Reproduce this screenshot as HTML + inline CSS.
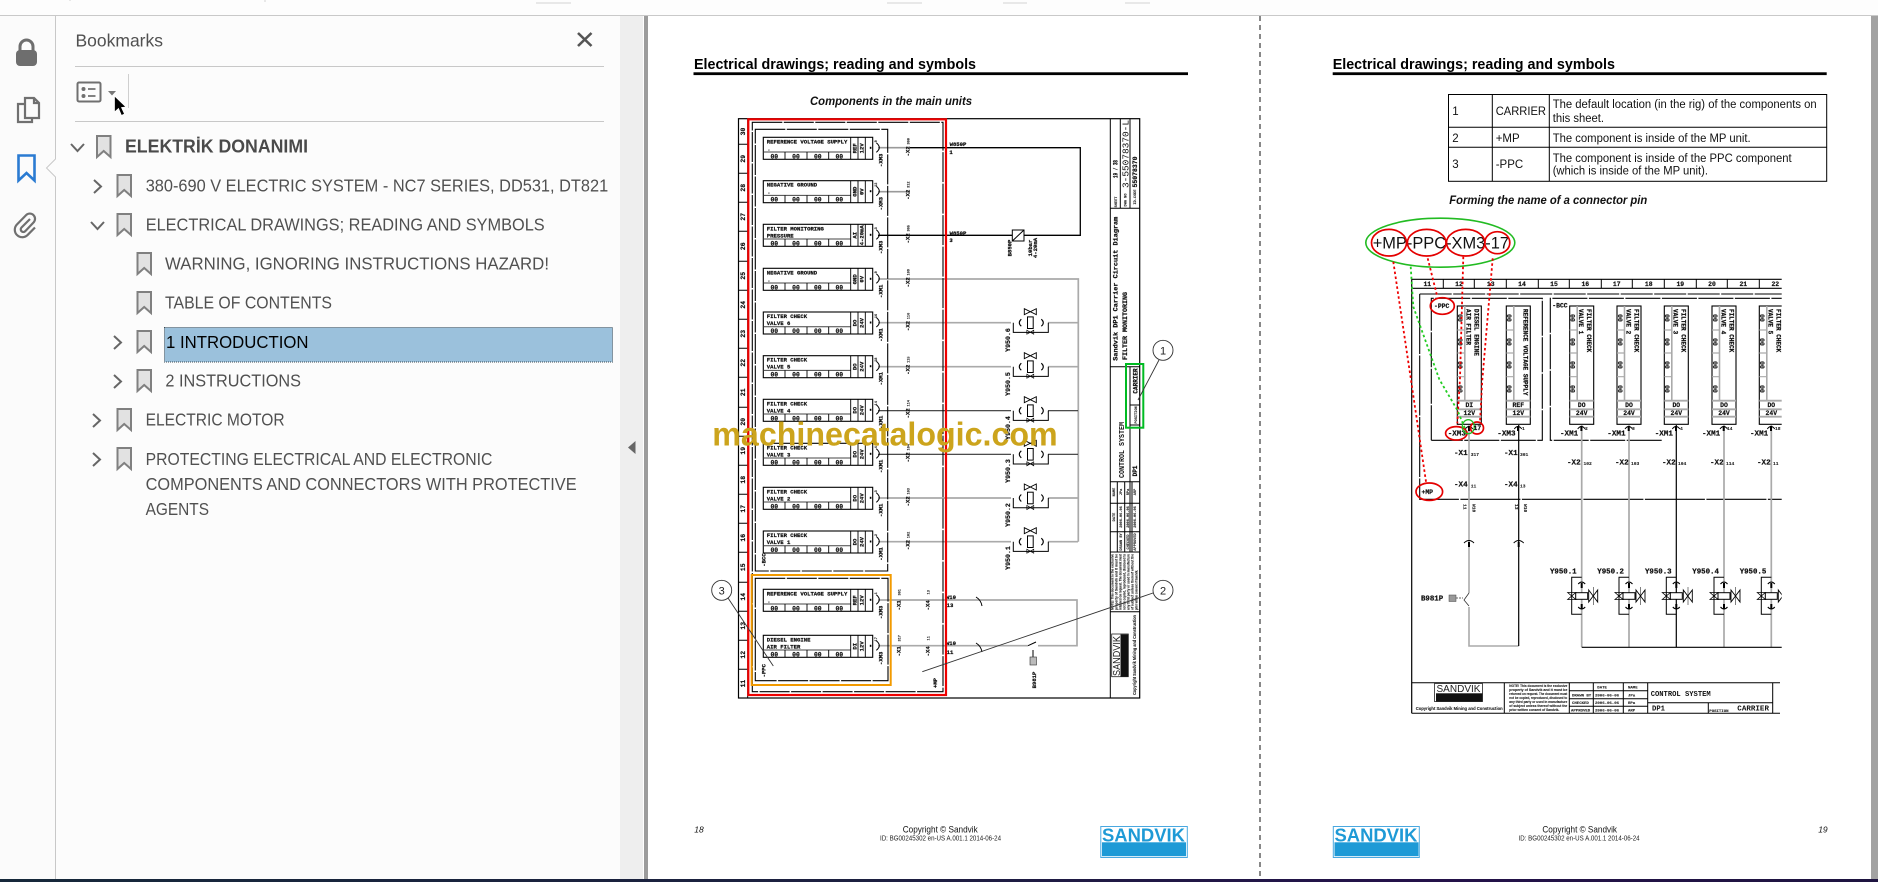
<!DOCTYPE html>
<html lang="en"><head><meta charset="utf-8"><title>Bookmarks</title>
<style>
html,body{margin:0;padding:0;background:#fff;overflow:hidden}
svg{display:block;position:absolute;left:0;top:0}
text{white-space:pre}
.ui{font-family:"Liberation Sans",sans-serif;font-size:17.5px;fill:#505050}
.h{font-family:"Liberation Sans",sans-serif;font-weight:700;font-size:15px;fill:#000}
.bi{font-family:"Liberation Sans",sans-serif;font-weight:700;font-style:italic;font-size:11.5px;fill:#111}
.t{font-family:"Liberation Sans",sans-serif;font-size:11.5px;fill:#111}
.m{font-family:"Liberation Mono",monospace;font-weight:700;font-size:5.6px;fill:#111;stroke:#111;stroke-width:.22}
.n{font-family:"Liberation Mono",monospace;font-weight:700;font-size:6.4px;fill:#111;stroke:#111;stroke-width:.18}
.s{font-family:"Liberation Mono",monospace;font-weight:700;font-size:3.6px;fill:#222;stroke:#222;stroke-width:.1}
.c{font-family:"Liberation Sans",sans-serif;font-size:9.5px;fill:#111}
.i{font-family:"Liberation Sans",sans-serif;font-size:7px;fill:#222}
.lg{font-family:"Liberation Sans",sans-serif;font-weight:700;font-size:18.5px;fill:#1e9ad6}
.ca{font-family:"Liberation Sans",sans-serif;font-size:11px;fill:#222;text-anchor:middle}
.tb{font-family:"Liberation Sans",sans-serif;font-weight:700;font-size:3.7px;fill:#222;stroke:#222;stroke-width:.1}
.mid{text-anchor:middle}
.pg{filter:blur(.28px)}
</style></head>
<body>
<svg width="1878" height="882" viewBox="0 0 1878 882" xmlns="http://www.w3.org/2000/svg">
<defs>
<g id="bm"><path d="M1 1H14.5V22L7.7 16L1 22Z" fill="#e2e2e2" stroke="#808080" stroke-width="2"/></g>
<path id="cr" d="M0 0L7 6.5L0 13" fill="none" stroke="#666" stroke-width="2"/>
<path id="cd" d="M0 0L6.5 7L13 0" fill="none" stroke="#666" stroke-width="2"/>
<g id="mod" fill="none" stroke="#000">
<rect x="0" y="0" width="109.4" height="22" fill="#fff" stroke-width="1.1"/>
<path d="M0 14.7H87.4" stroke="#444" stroke-width="1"/>
<path d="M21.7 14.7V22M43.7 14.7V22M65.4 14.7V22M87.4 0V22M94.7 0V22M102 0V22" stroke-width=".9"/>
<path d="M113 5.5Q119 10.5 113 15" stroke-width="1"/>
<rect x="106.5" y="9.5" width="1.6" height="2" fill="#000" stroke="none"/>
</g>
<g id="val" fill="none" stroke="#000" stroke-width="1">
<path d="M-17 0V9.7H18V0"/>
<rect x="-2.8" y="-5.8" width="5.7" height="11.6" fill="#fff"/>
<path d="M-9 -3.5Q-13 0 -9 3.5M11 -3.5Q15 0 11 3.5" stroke-width="1.1"/>
<path d="M-5 7.5L5 11.5V7.5L-5 11.5Z" stroke-width=".8" transform="scale(.7 1)"/>
<path d="M-6 -14L6 -8V-14L-6 -8Z" stroke-width=".9"/>
</g>
<g id="vmod" fill="none" stroke="#000">
<rect x="0" y="0" width="24" height="118.3" fill="#fff" stroke-width="1.1"/>
<path d="M7.5 0V94.7" stroke="#aaa" stroke-width="1.6"/>
<path d="M0 94.7H24M0 103.3H24M0 110.7H24" stroke="#aaa" stroke-width="1.8"/>
<path d="M0 24H7.5M0 47H7.5M0 70.7H7.5" stroke="#aaa" stroke-width="1.2"/>
<path d="M8 123Q11.7 118 15.5 123" stroke-width="1"/>
<rect x="10.7" y="120" width="2" height="5" fill="#000" stroke="none"/>
</g>
<g id="rv" fill="none" stroke="#000" stroke-width="1">
<path d="M0 -18.7H-10V18.3H0"/>
<rect x="-6" y="-3.3" width="12" height="6.6" fill="#fff" stroke-width="1"/>
<path d="M-3.5 -12Q0 -16 3.5 -12M-3.5 11Q0 15 3.5 11" stroke-width="1.1"/>
<rect x="-1" y="-13" width="2" height="5" fill="#000" stroke="none"/>
<rect x="-1" y="8" width="2" height="5" fill="#000" stroke="none"/>
<path d="M-14 -3.5H-6L-14 3.5H-6Z" stroke-width=".8"/>
<path d="M7 -7L16 5V-7L7 5Z" stroke-width=".9" transform="translate(0 1)"/>
<path d="M11.7 -9V9" stroke-width=".5"/>
</g>
<clipPath id="rc"><rect x="1400" y="270" width="381.7" height="450"/></clipPath>
</defs>

<!-- window chrome -->
<rect x="0" y="0" width="1878" height="882" fill="#fff"/>
<rect x="0" y="0" width="1878" height="15" fill="#fdfdfd"/>
<rect x="0" y="15" width="1878" height="1" fill="#c9c9c9"/>
<path d="M536 3H571M887 3H922M1003 3H1027M1125 3H1150M70 0V1M265 0V2" stroke="#d4d4d4" stroke-width="1"/>

<!-- left rail & panel -->
<rect x="0" y="16" width="55" height="863" fill="#fbfbfb"/>
<rect x="55" y="16" width="1" height="863" fill="#c8c8c8"/>
<rect x="56" y="16" width="564" height="863" fill="#fcfcfc"/>
<rect x="620" y="16" width="23" height="863" fill="#eeeeee"/>
<rect x="644" y="16" width="4" height="863" fill="#9c9c9c"/>
<path d="M635.5 441V454L628 447.5Z" fill="#666"/>

<!-- rail icons -->
<rect x="16" y="50" width="21" height="16" rx="4" fill="#6e6e6e"/>
<path d="M20 51V46.5a6.5 6.5 0 0 1 13 0V51" fill="none" stroke="#6e6e6e" stroke-width="3"/>
<g fill="none" stroke="#707070" stroke-width="2.2">
<path d="M25 98H34L39 103V118H25Z"/><path d="M34 98V103H39"/><path d="M25 104H18V122H32V118"/>
<path d="M30 219L21.5 227.5a2.6 2.6 0 0 0 3.7 3.7L33.5 222.5a5.2 5.2 0 0 0 -7.4 -7.4L16.8 224.6a7.5 7.5 0 0 0 10.6 10.6L35 227.5"/>
</g>
<path d="M18.5 155.5H34.5V180.5L26.5 173L18.5 180.5Z" fill="none" stroke="#2a7bd2" stroke-width="2.6"/>
<path d="M56 159L46.5 168L56 177Z" fill="#fcfcfc"/>
<path d="M55.5 159L46.5 168L55.5 177" fill="none" stroke="#c8c8c8" stroke-width="1"/>

<!-- panel header -->
<text class="ui" x="75.5" y="46.5" textLength="87.5" lengthAdjust="spacingAndGlyphs">Bookmarks</text>
<path d="M578 33L591.5 46M591.5 33L578 46" stroke="#555" stroke-width="2.6" fill="none"/>
<rect x="75" y="66" width="529" height="1" fill="#c8c8c8"/>
<rect x="75" y="121" width="529" height="1" fill="#c8c8c8"/>
<rect x="128" y="74" width="1" height="34" fill="#cfcfcf"/>
<rect x="77.5" y="82.5" width="23" height="19" rx="1.5" fill="none" stroke="#707070" stroke-width="2"/>
<circle cx="83.5" cy="89" r="2" fill="#707070"/><circle cx="83.5" cy="96" r="2" fill="#707070"/>
<path d="M88 89H95.5M88 96H95.5" stroke="#707070" stroke-width="1.8"/>
<path d="M108 91H116L112 95.5Z" fill="#777"/>
<path d="M114.5 96V112L118.5 108.5L121.5 115.5L124.5 114L121.5 107.5L126 107Z" fill="#000" stroke="#fff" stroke-width=".7"/>

<!-- tree -->
<use href="#cd" x="71" y="144"/><use href="#bm" x="96" y="135"/>
<text class="ui" x="125" y="152.7" textLength="183" lengthAdjust="spacingAndGlyphs" style="font-weight:700;font-size:18px;fill:#4a4a4a">ELEKTRİK DONANIMI</text>
<use href="#cr" x="94" y="180"/><use href="#bm" x="116.5" y="174"/>
<text class="ui" x="145.7" y="191.7" textLength="462.5" lengthAdjust="spacingAndGlyphs">380-690 V ELECTRIC SYSTEM - NC7 SERIES, DD531, DT821</text>
<use href="#cd" x="91" y="222"/><use href="#bm" x="116.5" y="213"/>
<text class="ui" x="145.7" y="230.7" textLength="399" lengthAdjust="spacingAndGlyphs">ELECTRICAL DRAWINGS; READING AND SYMBOLS</text>
<use href="#bm" x="136.5" y="252"/>
<text class="ui" x="165" y="269.7" textLength="384" lengthAdjust="spacingAndGlyphs">WARNING, IGNORING INSTRUCTIONS HAZARD!</text>
<use href="#bm" x="136.5" y="291"/>
<text class="ui" x="165" y="308.7" textLength="167" lengthAdjust="spacingAndGlyphs">TABLE OF CONTENTS</text>
<use href="#cr" x="114" y="336"/><use href="#bm" x="136.5" y="330"/>
<rect x="164.5" y="327.5" width="448" height="34.5" fill="#9bc1dc" stroke="#3a4a55" stroke-width="1" stroke-dasharray="1 1"/>
<text class="ui" x="166" y="348" textLength="142.5" lengthAdjust="spacingAndGlyphs" style="fill:#000">1 INTRODUCTION</text>
<use href="#cr" x="114" y="375"/><use href="#bm" x="136.5" y="369"/>
<text class="ui" x="165.4" y="386.7" textLength="135.6" lengthAdjust="spacingAndGlyphs">2 INSTRUCTIONS</text>
<use href="#cr" x="93" y="414"/><use href="#bm" x="116.5" y="408"/>
<text class="ui" x="145.6" y="425.7" textLength="139" lengthAdjust="spacingAndGlyphs">ELECTRIC MOTOR</text>
<use href="#cr" x="93" y="453"/><use href="#bm" x="116.5" y="447"/>
<text class="ui" x="145.6" y="465" textLength="346.8" lengthAdjust="spacingAndGlyphs">PROTECTING ELECTRICAL AND ELECTRONIC</text>
<text class="ui" x="145.6" y="490" textLength="431" lengthAdjust="spacingAndGlyphs">COMPONENTS AND CONNECTORS WITH PROTECTIVE</text>
<text class="ui" x="145.6" y="515" textLength="63.4" lengthAdjust="spacingAndGlyphs">AGENTS</text>

<!-- pages -->
<rect x="648" y="16" width="1223" height="863" fill="#fff"/>
<rect x="1871" y="16" width="7" height="863" fill="#a2a2a2"/>
<path d="M1260 16V879" stroke="#111" stroke-width="1" stroke-dasharray="5 4"/>

<g class="pg">
<!-- LEFT PAGE -->
<text class="h" x="694" y="69" textLength="282" lengthAdjust="spacingAndGlyphs">Electrical drawings; reading and symbols</text>
<rect x="693.5" y="72.3" width="494.5" height="2.8" fill="#000"/>
<text class="bi" x="810" y="105" textLength="162" lengthAdjust="spacingAndGlyphs">Components in the main units</text>

<rect x="738.5" y="118.7" width="401.2" height="579.3" fill="#fff" stroke="#000" stroke-width="1.2"/>
<path d="M747.7 118.7V698M738.5 144.3H747.7M738.5 173.3H747.7M738.5 202.3H747.7M738.5 231.3H747.7M738.5 261.3H747.7M738.5 290.3H747.7M738.5 319.3H747.7M738.5 348.3H747.7M738.5 377.3H747.7M738.5 407.3H747.7M738.5 436.3H747.7M738.5 465.3H747.7M738.5 494.3H747.7M738.5 523.3H747.7M738.5 552.3H747.7M738.5 582.3H747.7M738.5 611.3H747.7M738.5 640.3H747.7M738.5 669.3H747.7" stroke="#000" stroke-width="1" fill="none"/>
<g class="n mid">
<text transform="translate(745 131.5) rotate(-90)">30</text><text transform="translate(745 158.8) rotate(-90)">29</text><text transform="translate(745 187.8) rotate(-90)">28</text><text transform="translate(745 216.8) rotate(-90)">27</text><text transform="translate(745 246.3) rotate(-90)">26</text><text transform="translate(745 275.8) rotate(-90)">25</text><text transform="translate(745 304.8) rotate(-90)">24</text><text transform="translate(745 333.8) rotate(-90)">23</text><text transform="translate(745 362.8) rotate(-90)">22</text><text transform="translate(745 392.3) rotate(-90)">21</text><text transform="translate(745 421.8) rotate(-90)">20</text><text transform="translate(745 450.8) rotate(-90)">19</text><text transform="translate(745 479.8) rotate(-90)">18</text><text transform="translate(745 508.8) rotate(-90)">17</text><text transform="translate(745 537.8) rotate(-90)">16</text><text transform="translate(745 567.3) rotate(-90)">15</text><text transform="translate(745 596.8) rotate(-90)">14</text><text transform="translate(745 625.8) rotate(-90)">13</text><text transform="translate(745 654.8) rotate(-90)">12</text><text transform="translate(745 683.6) rotate(-90)">11</text>
</g>

<!-- wires -->
<g fill="none" stroke-width="1.3">
<path d="M878 147.7H910M878 191.7H910" stroke="#9a9a9a" stroke-width="1.6"/>
<path d="M910 147.7H1080.3V235.3H878" stroke="#000"/>
<path d="M878 279H1078.3V541.7M878 322.7H1011M878 366.7H1011M878 498H1011M878 541.7H1011M1048 322.7H1078M1048 366.7H1078M1048 498H1078M1048 541.7H1078M878 600H1077V645.7H1038M878 645.7H1028" stroke="#aaa" stroke-width="1.7"/>
<path d="M878 410.7H1011M1048 410.7H1078M878 454.3H1011M1048 454.3H1078" stroke="#333" stroke-width="1.2"/>
</g>

<!-- frames -->
<rect x="752.3" y="122.3" width="190.7" height="569.4" fill="none" stroke="#000" stroke-width="1.1" stroke-dasharray="30 1.5"/>
<rect x="755.3" y="129.3" width="132.4" height="441.7" fill="none" stroke="#000" stroke-width="1.1" stroke-dasharray="30 1.5"/>
<rect x="755.3" y="578.3" width="132.7" height="102.4" fill="none" stroke="#000" stroke-width="1.1" stroke-dasharray="30 1.5"/>

<!-- modules -->
<g transform="translate(763.3 137.3)"><use href="#mod"/><text class="m" x="3.5" y="6">REFERENCE VOLTAGE SUPPLY</text><text class="m" x="4" y="13">.</text><g class="n mid"><text x="11" y="21">00</text><text x="32.7" y="21">00</text><text x="54.5" y="21">00</text><text x="76" y="21">00</text></g><g class="m mid"><text transform="translate(93 11) rotate(-90)">REF</text><text transform="translate(100.3 11) rotate(-90)">12V</text><text transform="translate(119 23) rotate(-90)">-XM3</text><text transform="translate(146 14) rotate(-90)">-X2</text></g><g class="s mid"><text transform="translate(113.5 4) rotate(-90)">9</text><text transform="translate(146 4) rotate(-90)">300</text></g></g>
<g transform="translate(763.3 180.7)"><use href="#mod"/><text class="m" x="3.5" y="6">NEGATIVE GROUND</text><text class="m" x="4" y="13">.</text><g class="n mid"><text x="11" y="21">00</text><text x="32.7" y="21">00</text><text x="54.5" y="21">00</text><text x="76" y="21">00</text></g><g class="m mid"><text transform="translate(93 11) rotate(-90)">GND</text><text transform="translate(100.3 11) rotate(-90)">0V</text><text transform="translate(119 23) rotate(-90)">-XM3</text><text transform="translate(146 14) rotate(-90)">-X2</text></g><g class="s mid"><text transform="translate(113.5 4) rotate(-90)">12</text><text transform="translate(146 4) rotate(-90)">312</text></g></g>
<g transform="translate(763.3 224.3)"><use href="#mod"/><text class="m" x="3.5" y="6">FILTER MONITORING</text><text class="m" x="3.5" y="13">PRESSURE</text><g class="n mid"><text x="11" y="21">00</text><text x="32.7" y="21">00</text><text x="54.5" y="21">00</text><text x="76" y="21">00</text></g><g class="m mid"><text transform="translate(93 11) rotate(-90)">AI</text><text transform="translate(100.3 11) rotate(-90)">4-20mA</text><text transform="translate(119 23) rotate(-90)">-XM3</text><text transform="translate(146 14) rotate(-90)">-X2</text></g><g class="s mid"><text transform="translate(113.5 4) rotate(-90)">3</text><text transform="translate(146 4) rotate(-90)">305</text></g></g>
<g transform="translate(763.3 268.3)"><use href="#mod"/><text class="m" x="3.5" y="6">NEGATIVE GROUND</text><text class="m" x="4" y="13">.</text><g class="n mid"><text x="11" y="21">00</text><text x="32.7" y="21">00</text><text x="54.5" y="21">00</text><text x="76" y="21">00</text></g><g class="m mid"><text transform="translate(93 11) rotate(-90)">GND</text><text transform="translate(100.3 11) rotate(-90)">0V</text><text transform="translate(119 23) rotate(-90)">-XM1</text><text transform="translate(146 14) rotate(-90)">-X2</text></g><g class="s mid"><text transform="translate(113.5 4) rotate(-90)">9</text><text transform="translate(146 4) rotate(-90)">109</text></g></g>
<g transform="translate(763.3 312)"><use href="#mod"/><text class="m" x="3.5" y="6">FILTER CHECK</text><text class="m" x="3.5" y="13">VALVE 6</text><g class="n mid"><text x="11" y="21">00</text><text x="32.7" y="21">00</text><text x="54.5" y="21">00</text><text x="76" y="21">00</text></g><g class="m mid"><text transform="translate(93 11) rotate(-90)">DO</text><text transform="translate(100.3 11) rotate(-90)">24V</text><text transform="translate(119 23) rotate(-90)">-XM1</text><text transform="translate(146 14) rotate(-90)">-X2</text></g><g class="s mid"><text transform="translate(113.5 4) rotate(-90)">16</text><text transform="translate(146 4) rotate(-90)">116</text></g></g>
<g transform="translate(763.3 355.7)"><use href="#mod"/><text class="m" x="3.5" y="6">FILTER CHECK</text><text class="m" x="3.5" y="13">VALVE 5</text><g class="n mid"><text x="11" y="21">00</text><text x="32.7" y="21">00</text><text x="54.5" y="21">00</text><text x="76" y="21">00</text></g><g class="m mid"><text transform="translate(93 11) rotate(-90)">DO</text><text transform="translate(100.3 11) rotate(-90)">24V</text><text transform="translate(119 23) rotate(-90)">-XM1</text><text transform="translate(146 14) rotate(-90)">-X2</text></g><g class="s mid"><text transform="translate(113.5 4) rotate(-90)">18</text><text transform="translate(146 4) rotate(-90)">115</text></g></g>
<g transform="translate(763.3 399.3)"><use href="#mod"/><text class="m" x="3.5" y="6">FILTER CHECK</text><text class="m" x="3.5" y="13">VALVE 4</text><g class="n mid"><text x="11" y="21">00</text><text x="32.7" y="21">00</text><text x="54.5" y="21">00</text><text x="76" y="21">00</text></g><g class="m mid"><text transform="translate(93 11) rotate(-90)">DO</text><text transform="translate(100.3 11) rotate(-90)">24V</text><text transform="translate(119 23) rotate(-90)">-XM1</text><text transform="translate(146 14) rotate(-90)">-X2</text></g><g class="s mid"><text transform="translate(113.5 4) rotate(-90)">14</text><text transform="translate(146 4) rotate(-90)">114</text></g></g>
<g transform="translate(763.3 443.3)"><use href="#mod"/><text class="m" x="3.5" y="6">FILTER CHECK</text><text class="m" x="3.5" y="13">VALVE 3</text><g class="n mid"><text x="11" y="21">00</text><text x="32.7" y="21">00</text><text x="54.5" y="21">00</text><text x="76" y="21">00</text></g><g class="m mid"><text transform="translate(93 11) rotate(-90)">DO</text><text transform="translate(100.3 11) rotate(-90)">24V</text><text transform="translate(119 23) rotate(-90)">-XM1</text><text transform="translate(146 14) rotate(-90)">-X2</text></g><g class="s mid"><text transform="translate(113.5 4) rotate(-90)">4</text><text transform="translate(146 4) rotate(-90)">104</text></g></g>
<g transform="translate(763.3 487.3)"><use href="#mod"/><text class="m" x="3.5" y="6">FILTER CHECK</text><text class="m" x="3.5" y="13">VALVE 2</text><g class="n mid"><text x="11" y="21">00</text><text x="32.7" y="21">00</text><text x="54.5" y="21">00</text><text x="76" y="21">00</text></g><g class="m mid"><text transform="translate(93 11) rotate(-90)">DO</text><text transform="translate(100.3 11) rotate(-90)">24V</text><text transform="translate(119 23) rotate(-90)">-XM1</text><text transform="translate(146 14) rotate(-90)">-X2</text></g><g class="s mid"><text transform="translate(113.5 4) rotate(-90)">3</text><text transform="translate(146 4) rotate(-90)">103</text></g></g>
<g transform="translate(763.3 531)"><use href="#mod"/><text class="m" x="3.5" y="6">FILTER CHECK</text><text class="m" x="3.5" y="13">VALVE 1</text><g class="n mid"><text x="11" y="21">00</text><text x="32.7" y="21">00</text><text x="54.5" y="21">00</text><text x="76" y="21">00</text></g><g class="m mid"><text transform="translate(93 11) rotate(-90)">DO</text><text transform="translate(100.3 11) rotate(-90)">24V</text><text transform="translate(119 23) rotate(-90)">-XM1</text><text transform="translate(146 14) rotate(-90)">-X2</text></g><g class="s mid"><text transform="translate(113.5 4) rotate(-90)">2</text><text transform="translate(146 4) rotate(-90)">102</text></g></g>
<g transform="translate(763.3 589.3)"><use href="#mod"/><text class="m" x="3.5" y="6">REFERENCE VOLTAGE SUPPLY</text><text class="m" x="4" y="13">.</text><g class="n mid"><text x="11" y="21">00</text><text x="32.7" y="21">00</text><text x="54.5" y="21">00</text><text x="76" y="21">00</text></g><g class="m mid"><text transform="translate(93 11) rotate(-90)">REF</text><text transform="translate(100.3 11) rotate(-90)">12V</text><text transform="translate(119 23) rotate(-90)">-XM3</text><text transform="translate(137 16) rotate(-90)">-X1</text><text transform="translate(166 16) rotate(-90)">-X4</text></g><g class="s mid"><text transform="translate(113.5 4) rotate(-90)">1</text><text transform="translate(137 3) rotate(-90)">301</text><text transform="translate(166 3) rotate(-90)">13</text></g></g>
<g transform="translate(763.3 635.3)"><use href="#mod"/><text class="m" x="3.5" y="6">DIESEL ENGINE</text><text class="m" x="3.5" y="13">AIR FILTER</text><g class="n mid"><text x="11" y="21">00</text><text x="32.7" y="21">00</text><text x="54.5" y="21">00</text><text x="76" y="21">00</text></g><g class="m mid"><text transform="translate(93 11) rotate(-90)">DI</text><text transform="translate(100.3 11) rotate(-90)">12V</text><text transform="translate(119 23) rotate(-90)">-XM3</text><text transform="translate(137 16) rotate(-90)">-X1</text><text transform="translate(166 16) rotate(-90)">-X4</text></g><g class="s mid"><text transform="translate(113.5 4) rotate(-90)">17</text><text transform="translate(137 3) rotate(-90)">317</text><text transform="translate(166 3) rotate(-90)">11</text></g></g>

<g class="m mid">
<text transform="translate(765.5 560) rotate(-90)">-BCC</text>
<text transform="translate(765.5 670.7) rotate(-90)">-PPC</text>
<text transform="translate(937 683) rotate(-90)">+MP</text>
<text x="958" y="146">W850P</text><text x="951" y="154">1</text>
<text x="958" y="235">W850P</text><text x="951" y="242">3</text>
<text x="951" y="599">W10</text><text x="950" y="607">13</text>
<text x="951" y="645">W10</text><text x="950" y="654">11</text>
<text transform="translate(1011.5 248) rotate(-90)">B850P</text>
<text transform="translate(1032 248) rotate(-90)">10bar</text>
<text transform="translate(1037 248) rotate(-90)">4-20mA</text>
<text transform="translate(1036 680) rotate(-90)">B981P</text>
</g>
<rect x="1012.3" y="230" width="11.7" height="11" fill="#fff" stroke="#000"/>
<path d="M1012.3 241L1024 230" stroke="#000"/>
<path d="M976 597Q981 600 982 606M976 643Q981 646 982 652M1028 645.7L1036 642M1033 650V658" stroke="#000" fill="none"/>
<rect x="1030" y="657" width="6.5" height="8" fill="#bbb" stroke="#333" stroke-width=".6"/>

<!-- valves -->
<use href="#val" transform="translate(1030.3 322.7)"/><use href="#val" transform="translate(1030.3 366.7)"/><use href="#val" transform="translate(1030.3 410.7)"/><use href="#val" transform="translate(1030.3 454.3)"/><use href="#val" transform="translate(1030.3 498)"/><use href="#val" transform="translate(1030.3 541.7)"/>
<g class="n mid" style="font-size:6.6px">
<text transform="translate(1010 340) rotate(-90)">Y950.6</text>
<text transform="translate(1010 384) rotate(-90)">Y950.5</text>
<text transform="translate(1010 428) rotate(-90)">Y950.4</text>
<text transform="translate(1010 471) rotate(-90)">Y950.3</text>
<text transform="translate(1010 515) rotate(-90)">Y950.2</text>
<text transform="translate(1010 558) rotate(-90)">Y950.1</text>
</g>

<!-- title block left page -->
<g fill="none" stroke="#000" stroke-width="1">
<path d="M1110.3 118.7V698M1110.3 208.3H1139.7M1120.3 118.7V208.3M1130 118.7V208.3M1110.3 366.7H1139.7M1110.3 481.7H1139.7M1110.3 503.3H1139.7M1110.3 531.7H1139.7M1110.3 552H1139.7M1110.3 611.7H1139.7M1117.3 481.7V552M1124.7 481.7V552M1132 481.7V552M1130 366.7V425M1130 405H1139.7M1130 425H1139.7M1130 425V552"/>
</g>
<g class="m mid">
<text transform="translate(1117.5 169) rotate(-90)" style="font-size:6.6px" textLength="18" lengthAdjust="spacingAndGlyphs">19 / 38</text>
<text transform="translate(1128.5 154) rotate(-90)" style="font-size:9.5px;font-weight:400;stroke-width:0" textLength="68" lengthAdjust="spacingAndGlyphs">3-55078370-L</text>
<text transform="translate(1137 172) rotate(-90)" style="font-size:6px" textLength="31" lengthAdjust="spacingAndGlyphs">55078370</text>
<text transform="translate(1117.5 288.7) rotate(-90)" style="font-size:6px" textLength="144" lengthAdjust="spacingAndGlyphs">Sandvik DP1 Carrier Circuit Diagram</text>
<text transform="translate(1127 326) rotate(-90)" style="font-size:6px" textLength="68" lengthAdjust="spacingAndGlyphs">FILTER MONITORING</text>
<text transform="translate(1137.5 381) rotate(-90)" style="font-size:6px">CARRIER</text>
<text transform="translate(1124 450) rotate(-90)" style="font-size:7px;stroke-width:0" textLength="56" lengthAdjust="spacingAndGlyphs">CONTROL SYSTEM</text>
<text transform="translate(1137 471) rotate(-90)" style="font-size:6px">DP1</text>
</g>
<g class="s mid">
<text transform="translate(1117 202) rotate(-90)">SHEET</text><text transform="translate(1126.5 200) rotate(-90)">DWG NO</text><text transform="translate(1136 197) rotate(-90)">ID-CODE</text>
<text transform="translate(1137 415) rotate(-90)">POSITION</text>
<text transform="translate(1115 492) rotate(-90)">NAME</text><text transform="translate(1122 492) rotate(-90)">JPa</text><text transform="translate(1129 492) rotate(-90)">RPa</text><text transform="translate(1136 492) rotate(-90)">ARP</text>
<text transform="translate(1115 517) rotate(-90)">DATE</text><text transform="translate(1122 517) rotate(-90)">2006-06-06</text><text transform="translate(1129 517) rotate(-90)">2006-06-06</text><text transform="translate(1136 517) rotate(-90)">2006-06-06</text>
<text transform="translate(1122 542) rotate(-90)">DRAWN BY</text><text transform="translate(1129 542) rotate(-90)">CHECKED</text><text transform="translate(1136 542) rotate(-90)">APPROVED</text>
</g>
<g class="tb">
<text transform="translate(1113.5 610) rotate(-90)" textLength="56" lengthAdjust="spacingAndGlyphs">NOTE! This document is the exclusive</text>
<text transform="translate(1117.5 610) rotate(-90)" textLength="56" lengthAdjust="spacingAndGlyphs">property of Sandvik and it must be</text>
<text transform="translate(1121.5 610) rotate(-90)" textLength="56" lengthAdjust="spacingAndGlyphs">returned on request. The document must</text>
<text transform="translate(1125.5 610) rotate(-90)" textLength="56" lengthAdjust="spacingAndGlyphs">not be copied, reproduced, disclosed to</text>
<text transform="translate(1129.5 610) rotate(-90)" textLength="56" lengthAdjust="spacingAndGlyphs">any third party or used in manufacture</text>
<text transform="translate(1133.5 610) rotate(-90)" textLength="56" lengthAdjust="spacingAndGlyphs">of subject unless thereof without the</text>
<text transform="translate(1137.5 610) rotate(-90)" textLength="40" lengthAdjust="spacingAndGlyphs">prior written consent of Sandvik.</text>
</g>
<rect x="1111.7" y="634" width="16.6" height="42.7" fill="#fff" stroke="#222" stroke-width=".8"/>
<rect x="1120.5" y="634.5" width="7.8" height="42" fill="#111"/>
<text transform="translate(1120 676) rotate(-90)" style="font-family:'Liberation Sans',sans-serif;font-size:10px;fill:#222" textLength="40" lengthAdjust="spacingAndGlyphs">SANDVIK</text>
<text class="tb" transform="translate(1136 695) rotate(-90)" style="font-size:4.5px" textLength="80" lengthAdjust="spacingAndGlyphs">Copyright Sandvik Mining and Construction</text>

<!-- red/orange/green highlights -->
<rect x="748.3" y="119.3" width="197.7" height="575.7" fill="none" stroke="#ee0000" stroke-width="2.2"/>
<rect x="751.7" y="575" width="139" height="110" fill="none" stroke="#f29a00" stroke-width="2"/>
<rect x="1126" y="364" width="17.3" height="63.7" fill="none" stroke="#00bb22" stroke-width="2"/>

<!-- callouts -->
<g fill="#fff" stroke="#333" stroke-width=".9">
<path d="M1159 360L1138 400M1153 593L922.3 671.7M728 598L773.3 666" fill="none"/>
<circle cx="1163" cy="350.3" r="10"/><circle cx="1163" cy="590.3" r="10"/><circle cx="721.7" cy="590.3" r="10"/>
</g>
<text class="ca" x="1163" y="354.3">1</text><text class="ca" x="1163" y="594.3">2</text><text class="ca" x="721.7" y="594.3">3</text>

<!-- footer left -->
<text x="694.3" y="832.7" style="font-family:'Liberation Sans',sans-serif;font-style:italic;font-size:8.5px;fill:#111">18</text>
<text class="c" x="902.7" y="832.7" textLength="75" lengthAdjust="spacingAndGlyphs">Copyright © Sandvik</text>
<text class="i" x="880" y="840.7" textLength="121" lengthAdjust="spacingAndGlyphs">ID: BG00245302 en-US A.001.1 2014-06-24</text>
<rect x="1100.8" y="826.5" width="86.5" height="31" fill="#fff" stroke="#4aa8e0" stroke-width="1"/>
<rect x="1102" y="842.3" width="84" height="13.9" fill="#1e9ad6"/>
<text class="lg" x="1102" y="841.3" textLength="83" lengthAdjust="spacingAndGlyphs">SANDVIK</text>

<!-- RIGHT PAGE -->
<text class="h" x="1332.7" y="69" textLength="282.3" lengthAdjust="spacingAndGlyphs">Electrical drawings; reading and symbols</text>
<rect x="1332.7" y="72.3" width="494" height="2.8" fill="#000"/>

<g fill="none" stroke="#000" stroke-width="1">
<rect x="1448.5" y="94.5" width="378.2" height="86.8"/>
<path d="M1492.3 94.5V181.3M1549.3 94.5V181.3M1448.5 127.3H1826.7M1448.5 147.3H1826.7"/>
</g>
<text class="t" x="1452.3" y="115">1</text>
<text class="t" x="1495.7" y="115" textLength="50.3" lengthAdjust="spacingAndGlyphs">CARRIER</text>
<text class="t" x="1552.7" y="108" textLength="264" lengthAdjust="spacingAndGlyphs">The default location (in the rig) of the components on</text>
<text class="t" x="1552.7" y="122" textLength="51.3" lengthAdjust="spacingAndGlyphs">this sheet.</text>
<text class="t" x="1452.3" y="142">2</text>
<text class="t" x="1495.7" y="142">+MP</text>
<text class="t" x="1552.7" y="142" textLength="198" lengthAdjust="spacingAndGlyphs">The component is inside of the MP unit.</text>
<text class="t" x="1452.3" y="168">3</text>
<text class="t" x="1495.7" y="168">-PPC</text>
<text class="t" x="1552.7" y="162" textLength="239" lengthAdjust="spacingAndGlyphs">The component is inside of the PPC component</text>
<text class="t" x="1552.7" y="174.7" textLength="155.3" lengthAdjust="spacingAndGlyphs">(which is inside of the MP unit).</text>
<text class="bi" x="1449.3" y="204" textLength="198" lengthAdjust="spacingAndGlyphs">Forming the name of a connector pin</text>

<g clip-path="url(#rc)">
<g fill="none" stroke="#000">
<path d="M1411.7 279.3V713.3M1411.7 279.3H1782M1411.7 288.3H1782" stroke-width="1.2"/>
<path d="M1443.3 279.3V288.3M1474.3 279.3V288.3M1506.3 279.3V288.3M1538.3 279.3V288.3M1569.3 279.3V288.3M1601.3 279.3V288.3M1632.3 279.3V288.3M1664.3 279.3V288.3M1696.3 279.3V288.3M1727.3 279.3V288.3M1759.3 279.3V288.3" stroke-width="1"/>
<path d="M1419.7 294H1782" stroke-width="1" stroke-dasharray="32 1.5"/>
<path d="M1419.7 294V499.3H1782" stroke-width="1.1" stroke-dasharray="60 1.5"/>
<path d="M1431.3 440.3V298.3H1542.3V440.3H1431.3" stroke-width="1.1" stroke-dasharray="35 1.5"/>
<path d="M1661.7 440.3H1550.3V298.3H1782" stroke-width="1.1" stroke-dasharray="35 1.5"/>
</g>
<g class="n mid">
<text x="1427.3" y="286">11</text><text x="1459" y="286">12</text><text x="1490.7" y="286">13</text><text x="1522" y="286">14</text><text x="1554" y="286">15</text><text x="1585.3" y="286">16</text><text x="1616.7" y="286">17</text><text x="1648.7" y="286">18</text><text x="1680.3" y="286">19</text><text x="1712" y="286">20</text><text x="1743.3" y="286">21</text><text x="1775.3" y="286">22</text>
</g>

<!-- right wires -->
<g fill="none">
<path d="M1469 425V593M1469 607V646H1518.7" stroke="#aaa" stroke-width="1.6"/>
<path d="M1581.7 425V647M1629 425V647M1724 425V647M1771.3 425V647" stroke="#aaa" stroke-width="1.7"/>
<path d="M1518.7 425V646M1676.3 425V647M1581.7 647.3H1782" stroke="#000" stroke-width="1.2"/>
<path d="M1469 593L1464 600L1469 606" stroke="#333" stroke-width=".8"/>
<path d="M1456 598H1463" stroke="#333" stroke-width=".7" stroke-dasharray="2 1"/>
<path d="M1464 543Q1469 538 1474 543M1513.7 543Q1518.7 538 1523.7 543" stroke="#000" stroke-width="1"/>
</g>
<rect x="1468" y="542" width="2" height="5" fill="#000"/><rect x="1517.7" y="542" width="2" height="5" fill="#000"/>
<rect x="1449" y="595" width="7" height="6.5" fill="#999" stroke="#444" stroke-width=".5"/>

<!-- vertical modules -->
<g transform="translate(1457.3 306)"><use href="#vmod"/><g class="m" style="font-size:6px"><text transform="translate(17.3 3) rotate(90)">DIESEL ENGINE</text><text transform="translate(9.3 3) rotate(90)">AIR FILTER</text></g><g class="n mid"><text transform="translate(.8 12) rotate(90)">00</text><text transform="translate(.8 36) rotate(90)">00</text><text transform="translate(.8 59) rotate(90)">00</text><text transform="translate(.8 83) rotate(90)">00</text><text x="12" y="101">DI</text><text x="12" y="109">12V</text></g></g>
<g transform="translate(1506.3 306)"><use href="#vmod"/><g class="m" style="font-size:6px"><text transform="translate(17.3 3) rotate(90)">REFERENCE VOLTAGE SUPPLY</text></g><g class="n mid"><text transform="translate(.8 12) rotate(90)">00</text><text transform="translate(.8 36) rotate(90)">00</text><text transform="translate(.8 59) rotate(90)">00</text><text transform="translate(.8 83) rotate(90)">00</text><text x="12" y="101">REF</text><text x="12" y="109">12V</text></g></g>
<g transform="translate(1569.7 306)"><use href="#vmod"/><g class="m" style="font-size:6px"><text transform="translate(17.3 3) rotate(90)">FILTER CHECK</text><text transform="translate(9.3 3) rotate(90)">VALVE 1</text></g><g class="n mid"><text transform="translate(.8 12) rotate(90)">00</text><text transform="translate(.8 36) rotate(90)">00</text><text transform="translate(.8 59) rotate(90)">00</text><text transform="translate(.8 83) rotate(90)">00</text><text x="12" y="101">DO</text><text x="12" y="109">24V</text></g></g>
<g transform="translate(1617 306)"><use href="#vmod"/><g class="m" style="font-size:6px"><text transform="translate(17.3 3) rotate(90)">FILTER CHECK</text><text transform="translate(9.3 3) rotate(90)">VALVE 2</text></g><g class="n mid"><text transform="translate(.8 12) rotate(90)">00</text><text transform="translate(.8 36) rotate(90)">00</text><text transform="translate(.8 59) rotate(90)">00</text><text transform="translate(.8 83) rotate(90)">00</text><text x="12" y="101">DO</text><text x="12" y="109">24V</text></g></g>
<g transform="translate(1664.3 306)"><use href="#vmod"/><g class="m" style="font-size:6px"><text transform="translate(17.3 3) rotate(90)">FILTER CHECK</text><text transform="translate(9.3 3) rotate(90)">VALVE 3</text></g><g class="n mid"><text transform="translate(.8 12) rotate(90)">00</text><text transform="translate(.8 36) rotate(90)">00</text><text transform="translate(.8 59) rotate(90)">00</text><text transform="translate(.8 83) rotate(90)">00</text><text x="12" y="101">DO</text><text x="12" y="109">24V</text></g></g>
<g transform="translate(1712 306)"><use href="#vmod"/><g class="m" style="font-size:6px"><text transform="translate(17.3 3) rotate(90)">FILTER CHECK</text><text transform="translate(9.3 3) rotate(90)">VALVE 4</text></g><g class="n mid"><text transform="translate(.8 12) rotate(90)">00</text><text transform="translate(.8 36) rotate(90)">00</text><text transform="translate(.8 59) rotate(90)">00</text><text transform="translate(.8 83) rotate(90)">00</text><text x="12" y="101">DO</text><text x="12" y="109">24V</text></g></g>
<g transform="translate(1759.3 306)"><use href="#vmod"/><g class="m" style="font-size:6px"><text transform="translate(17.3 3) rotate(90)">FILTER CHECK</text><text transform="translate(9.3 3) rotate(90)">VALVE 5</text></g><g class="n mid"><text transform="translate(.8 12) rotate(90)">00</text><text transform="translate(.8 36) rotate(90)">00</text><text transform="translate(.8 59) rotate(90)">00</text><text transform="translate(.8 83) rotate(90)">00</text><text x="12" y="101">DO</text><text x="12" y="109">24V</text></g></g>

<!-- valves right -->
<use href="#rv" transform="translate(1581.7 596)"/><use href="#rv" transform="translate(1629 596)"/><use href="#rv" transform="translate(1676.3 596)"/><use href="#rv" transform="translate(1724 596)"/><use href="#rv" transform="translate(1771.3 596)"/>

<g class="m" style="font-size:7.4px">
<text x="1550" y="573.3">Y950.1</text><text x="1597.3" y="573.3">Y950.2</text><text x="1645" y="573.3">Y950.3</text><text x="1692.3" y="573.3">Y950.4</text><text x="1739.7" y="573.3">Y950.5</text>
<text x="1421" y="600.7">B981P</text>
</g>
<g class="m" style="font-size:7.6px">
<text x="1447.7" y="435.7">-XM3</text><text x="1497.3" y="435.7">-XM3</text><text x="1560" y="435.7">-XM1</text><text x="1607.3" y="435.7">-XM1</text><text x="1654.7" y="435.7">-XM1</text><text x="1702" y="435.7">-XM1</text><text x="1750" y="435.7">-XM1</text>
<text x="1454" y="455">-X1</text><text x="1504" y="455">-X1</text>
<text x="1567" y="464.3">-X2</text><text x="1615" y="464.3">-X2</text><text x="1662" y="464.3">-X2</text><text x="1710" y="464.3">-X2</text><text x="1757" y="464.3">-X2</text>
<text x="1454" y="486.7">-X4</text><text x="1504" y="486.7">-X4</text>
</g>
<text class="m" x="1552.3" y="307.3" style="font-size:6.4px">-BCC</text>
<g class="s" style="font-size:4.6px">
<text x="1470.7" y="456">317</text><text x="1520" y="456">301</text>
<text x="1583.5" y="465">102</text><text x="1631" y="465">103</text><text x="1678" y="465">104</text><text x="1726" y="465">114</text><text x="1773" y="465">11</text>
<text x="1470.7" y="487.5">11</text><text x="1520" y="487.5">13</text>
<text x="1522" y="430">1</text><text x="1585" y="430">2</text><text x="1632" y="430">3</text><text x="1680" y="430">4</text><text x="1727" y="430">14</text><text x="1775" y="430">18</text>
<text transform="translate(1463.5 504) rotate(90)">11</text><text transform="translate(1472.5 504) rotate(90)">W10</text><text transform="translate(1515 504) rotate(90)">13</text><text transform="translate(1524 504) rotate(90)">W10</text>
</g>
</g>

<!-- title block right -->
<g fill="none" stroke="#000" stroke-width="1">
<path d="M1411.7 682.7H1780M1411.7 713.3H1780M1504.3 682.7V713.3M1569.3 682.7V713.3M1593.3 682.7V713.3M1623.3 682.7V713.3M1647.7 682.7V713.3M1772.7 682.7V713.3M1569.3 690.7H1647.7M1569.3 698.7H1647.7M1569.3 706.3H1647.7M1647.7 702.7H1772.7M1708.3 702.7V713.3"/>
</g>
<rect x="1434.5" y="683.5" width="48" height="18" fill="#fff" stroke="#222" stroke-width=".8"/>
<rect x="1436" y="693.3" width="46.5" height="8.4" fill="#111"/>
<text x="1436.5" y="692" style="font-family:'Liberation Sans',sans-serif;font-size:10.5px;fill:#222" textLength="44" lengthAdjust="spacingAndGlyphs">SANDVIK</text>
<text class="tb" x="1415.7" y="710" style="font-size:4.8px" textLength="87" lengthAdjust="spacingAndGlyphs">Copyright Sandvik Mining and Construction</text>
<g class="tb">
<text x="1509.3" y="687" textLength="58" lengthAdjust="spacingAndGlyphs">NOTE! This document is the exclusive</text>
<text x="1509.3" y="691" textLength="58" lengthAdjust="spacingAndGlyphs">property of Sandvik and it must be</text>
<text x="1509.3" y="695" textLength="58" lengthAdjust="spacingAndGlyphs">returned on request. The document must</text>
<text x="1509.3" y="699" textLength="58" lengthAdjust="spacingAndGlyphs">not be copied, reproduced, disclosed to</text>
<text x="1509.3" y="703" textLength="58" lengthAdjust="spacingAndGlyphs">any third party or used in manufacture</text>
<text x="1509.3" y="707" textLength="58" lengthAdjust="spacingAndGlyphs">of subject unless thereof without the</text>
<text x="1509.3" y="711" textLength="50" lengthAdjust="spacingAndGlyphs">prior written consent of Sandvik.</text>
</g>
<g class="s" style="font-size:4px">
<text x="1597.3" y="688.3">DATE</text><text x="1628" y="688.3">NAME</text>
<text x="1572" y="696.5">DRAWN BY</text><text x="1572" y="704">CHECKED</text><text x="1571" y="711.5">APPROVED</text>
<text x="1595" y="696.5">2006-06-06</text><text x="1595" y="704">2006-06-06</text><text x="1595" y="711.5">2006-06-06</text>
<text x="1628" y="696.5">JPa</text><text x="1628" y="704">RPa</text><text x="1628" y="711.5">ARP</text>
<text x="1709.3" y="712">POSITION</text>
</g>
<g style="font-family:'Liberation Mono',monospace;font-size:7.2px;fill:#111;font-weight:700">
<text x="1650.7" y="696" textLength="60" lengthAdjust="spacingAndGlyphs">CONTROL SYSTEM</text>
<text x="1652" y="710.7">DP1</text>
<text x="1737.3" y="710.7" textLength="31.7" lengthAdjust="spacingAndGlyphs">CARRIER</text>
</g>

<!-- connector name + ellipses -->
<ellipse cx="1440.3" cy="242.7" rx="74.5" ry="24.5" fill="none" stroke="#22bb22" stroke-width="1.6"/>
<text x="1372.7" y="248.3" textLength="136.3" lengthAdjust="spacingAndGlyphs" style="font-family:'Liberation Sans',sans-serif;font-size:17px;fill:#111">+MP-PPC-XM3-17</text>
<g fill="none" stroke="#e40000" stroke-width="1.7">
<ellipse cx="1389" cy="242.7" rx="17.5" ry="13.3"/><ellipse cx="1426.7" cy="242.7" rx="19.3" ry="13.3"/><ellipse cx="1465.7" cy="242.7" rx="19.2" ry="13.3"/><ellipse cx="1497.3" cy="242.7" rx="12.5" ry="11"/>
<ellipse cx="1442.3" cy="306" rx="12" ry="8.3"/><ellipse cx="1456.3" cy="433.3" rx="10.7" ry="6.7"/><ellipse cx="1477" cy="428" rx="6.5" ry="6"/><ellipse cx="1429.3" cy="491.7" rx="13.3" ry="8.7"/>
</g>
<ellipse cx="1468.3" cy="426.7" rx="6" ry="7" fill="none" stroke="#22bb22" stroke-width="1.3"/>
<g class="m" style="font-size:6.4px">
<text x="1434" y="308">-PPC</text><text x="1421.5" y="494">+MP</text><text x="1473.5" y="430">17</text>
</g>
<g fill="none" stroke-width="1.8" stroke-dasharray="2.5 2.5">
<path d="M1393.3 261.7L1410.7 378L1426 481.7" stroke="#ee0000"/>
<path d="M1427.7 258.3L1437.3 296.7" stroke="#ee0000"/>
<path d="M1463.3 256.7L1460 378L1457.3 423.3" stroke="#ee0000"/>
<path d="M1492.7 258.3L1482.3 380L1480 421.7" stroke="#ee0000"/>
<path d="M1410.7 266.7L1413.3 306.7L1439.3 379.3L1457.3 410L1466 431" stroke="#22cc22"/>
</g>

<!-- footer right -->
<rect x="1333.3" y="826.5" width="86" height="31" fill="#fff" stroke="#4aa8e0" stroke-width="1"/>
<rect x="1334.5" y="842.3" width="84" height="13.9" fill="#1e9ad6"/>
<text class="lg" x="1334.5" y="841.3" textLength="83" lengthAdjust="spacingAndGlyphs">SANDVIK</text>
<text class="c" x="1542.4" y="832.7" textLength="74.6" lengthAdjust="spacingAndGlyphs">Copyright © Sandvik</text>
<text class="i" x="1518.6" y="840.7" textLength="121" lengthAdjust="spacingAndGlyphs">ID: BG00245302 en-US A.001.1 2014-06-24</text>
<text x="1818.2" y="832.7" style="font-family:'Liberation Sans',sans-serif;font-style:italic;font-size:8.5px;fill:#111">19</text>
</g>

<!-- watermark -->
<text x="712.3" y="445.7" textLength="345.4" lengthAdjust="spacingAndGlyphs" style="font-family:'Liberation Sans',sans-serif;font-weight:700;font-size:33px;fill:#cca41c">machinecatalogic.com</text>

<!-- bottom bar -->
<defs><linearGradient id="bb" x1="0" x2="1" y1="0" y2="0"><stop offset="0" stop-color="#16283a"/><stop offset=".45" stop-color="#1c2040"/><stop offset=".75" stop-color="#24124a"/><stop offset="1" stop-color="#1e1440"/></linearGradient></defs>
<rect x="0" y="879" width="1878" height="3" fill="url(#bb)"/>
</svg>
</body></html>
